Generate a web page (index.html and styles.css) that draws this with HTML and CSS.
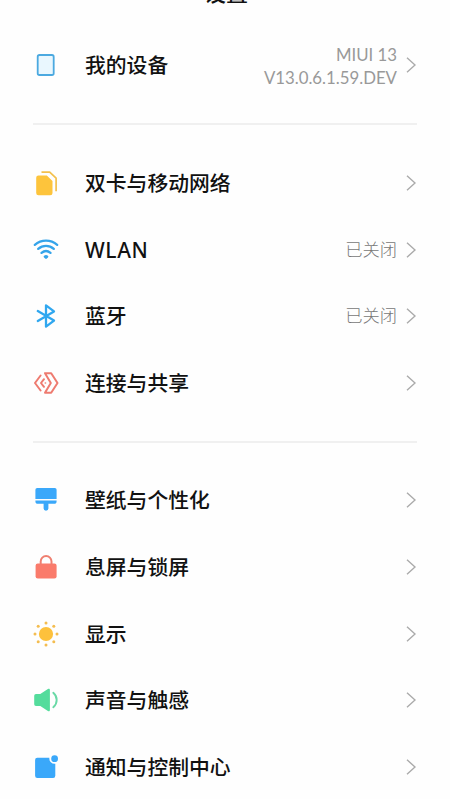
FILE: index.html
```html
<!DOCTYPE html>
<html lang="zh-CN">
<head>
<meta charset="utf-8">
<title>设置</title>
<link rel="stylesheet" href="styles.css">
</head>
<body>
<main class="screen">
  <header class="header"><h1 class="title">设置</h1></header>

  <section class="group">
    <div class="row">
      <svg class="icon" viewBox="0 0 28 28"><rect x="5.700" y="4" width="16" height="20" rx="1.8" fill="#e9f7fe" stroke="#4ba9e0" stroke-width="1.8"/></svg>
      <span class="label">我的设备</span>
      <span class="value version"><span>MIUI 13</span><span>V13.0.6.1.59.DEV</span></span>
      <svg class="chevron" viewBox="0 0 10 16"><path d="M1 .8 9 8 1 15.2"/></svg>
    </div>
  </section>

  <section class="group">
    <div class="row">
      <svg class="icon" viewBox="0 0 28 28"><path d="M6.500 6.400h8.300l5.700 5.600v12a2.300 2.300 0 0 1-2.300 2.300H6.500A2.300 2.300 0 0 1 4.200 24V8.700a2.300 2.300 0 0 1 2.300-2.300z" fill="#fdc43c"/><path d="M9.500 3.200h8.200l6.400 6v13" fill="none" stroke="#f3c04d" stroke-width="1.700" stroke-linejoin="round"/></svg>
      <span class="label">双卡与移动网络</span>
      <svg class="chevron" viewBox="0 0 10 16"><path d="M1 .8 9 8 1 15.2"/></svg>
    </div>
    <div class="row">
      <svg class="icon" viewBox="0 0 28 28" fill="none" stroke="#35a4ea" stroke-width="2.300" stroke-linecap="round"><path d="M2.800 8.900c6.500-5.600 15.900-5.600 22.400 0M6.200 12.900c4.600-4 11-4 15.600 0M9.500 16.900c2.700-2.300 6.300-2.300 9 0"/><path d="M12.800 20.600q1.200-1 2.400 0L14 21.800z" stroke-linejoin="round"/></svg>
      <span class="label latin">WLAN</span>
      <span class="value">已关闭</span>
      <svg class="chevron" viewBox="0 0 10 16"><path d="M1 .8 9 8 1 15.2"/></svg>
    </div>
    <div class="row">
      <svg class="icon" viewBox="0 0 28 28"><path d="M5.800 9 22 18.600 14 24.600V3.400L22 9.400 5.800 19" fill="none" stroke="#30a7ef" stroke-width="2.300" stroke-linejoin="round" stroke-linecap="round"/></svg>
      <span class="label">蓝牙</span>
      <span class="value">已关闭</span>
      <svg class="chevron" viewBox="0 0 10 16"><path d="M1 .8 9 8 1 15.2"/></svg>
    </div>
    <div class="row">
      <svg class="icon" viewBox="0 0 28 28" fill="none" stroke="#ee7b70" stroke-width="2" stroke-linejoin="round" stroke-linecap="round"><path d="M13 4.200h6.200l6.300 9.800-6.300 9.800H13l5.800-9.800z"/><path d="M8.600 6.500 3 14l5.600 7.500M12 10.200 9 14l3 3.800"/><path d="M13.300 14h.2" stroke-width="1.600"/></svg>
      <span class="label">连接与共享</span>
      <svg class="chevron" viewBox="0 0 10 16"><path d="M1 .8 9 8 1 15.2"/></svg>
    </div>
  </section>

  <section class="group">
    <div class="row">
      <svg class="icon" viewBox="0 0 28 28" fill="#3aa8fa"><path d="M5.200 2h17.600a1.800 1.800 0 0 1 1.800 1.800V13H3.400V3.800A1.800 1.800 0 0 1 5.200 2z"/><path d="M3.400 14.600h21.200v.6a2.600 2.600 0 0 1-2.600 2.600h-5.600v4.500a2.400 2.400 0 0 1-4.800 0v-4.500H6a2.600 2.600 0 0 1-2.600-2.600z"/></svg>
      <span class="label">壁纸与个性化</span>
      <svg class="chevron" viewBox="0 0 10 16"><path d="M1 .8 9 8 1 15.2"/></svg>
    </div>
    <div class="row">
      <svg class="icon" viewBox="0 0 28 28"><rect x="3.600" y="10.500" width="21" height="15" rx="2.200" fill="#fa7b6b"/><path d="M8.700 11.500V8.400a5.400 5.400 0 0 1 10.800 0v3.100" fill="none" stroke="#ef7f70" stroke-width="2"/></svg>
      <span class="label">息屏与锁屏</span>
      <svg class="chevron" viewBox="0 0 10 16"><path d="M1 .8 9 8 1 15.2"/></svg>
    </div>
    <div class="row">
      <svg class="icon" viewBox="0 0 28 28" fill="#fdc13c"><circle cx="14" cy="14" r="7.100"/><g fill="#f4bd50"><circle cx="14" cy="3" r="1.500"/><circle cx="14" cy="25" r="1.500"/><circle cx="3" cy="14" r="1.500"/><circle cx="25" cy="14" r="1.500"/><circle cx="6.200" cy="6.200" r="1.500"/><circle cx="21.800" cy="6.200" r="1.500"/><circle cx="6.200" cy="21.800" r="1.500"/><circle cx="21.800" cy="21.800" r="1.500"/></g></svg>
      <span class="label">显示</span>
      <svg class="chevron" viewBox="0 0 10 16"><path d="M1 .8 9 8 1 15.2"/></svg>
    </div>
    <div class="row">
      <svg class="icon" viewBox="0 0 28 28"><path d="M4 8h4.300l7.600-5c1-.7 2-.3 2 .9v20.200c0 1.200-1 1.600-2 .9L8.300 20H4a1.800 1.800 0 0 1-1.800-1.800V9.800A1.800 1.800 0 0 1 4 8z" fill="#54dc9c"/><path d="M21.300 6.800c4.500 3.800 4.500 10.600 0 14.400" fill="none" stroke="#69d9a6" stroke-width="1.900" stroke-linecap="round"/></svg>
      <span class="label">声音与触感</span>
      <svg class="chevron" viewBox="0 0 10 16"><path d="M1 .8 9 8 1 15.2"/></svg>
    </div>
    <div class="row">
      <svg class="icon" viewBox="0 0 28 28" fill="#3aa8fa"><path d="M5.300 4.800H17.400a5.300 5.300 0 0 0 5.900 6V22.700a2.200 2.200 0 0 1-2.200 2.200H5.300a2.200 2.200 0 0 1-2.200-2.200V7a2.200 2.200 0 0 1 2.200-2.200z"/><circle cx="22.600" cy="5.700" r="3.400"/></svg>
      <span class="label">通知与控制中心</span>
      <svg class="chevron" viewBox="0 0 10 16"><path d="M1 .8 9 8 1 15.2"/></svg>
    </div>
  </section>
</main>
</body>
</html>
```
FILE: styles.css
```css
* {
  box-sizing: border-box;
}

body {
  margin: 0;
  background: #fefefe;
  color: #111;
  font-family: "Noto Sans CJK SC", sans-serif;
}

.screen {
  height: 799px;
  padding: 0 33px;
  overflow: hidden;
}

.header {
  height: 32.200px;
  overflow: hidden;
}

.title {
  margin: -20px 0 0 2px;
  font-size: 22px;
  line-height: 22px;
  font-weight: 500;
  text-align: center;
}

.group + .group {
  margin-top: 24.500px;
  padding-top: 24.500px;
  border-top: 2px solid #f0f0f0;
}

.row {
  display: flex;
  align-items: center;
  height: 66.600px;
}

.icon {
  flex: none;
  width: 28px;
  height: 28px;
  margin: 0 25px 0 -1px;
}

.label {
  flex: 1;
  padding-bottom: 2px;
  font-size: 20.800px;
  line-height: 30px;
  font-weight: 500;
  white-space: nowrap;
}

.latin {
  padding-bottom: 0;
  font-family: "Noto Sans", sans-serif;
  font-size: 21px;
  letter-spacing: .6px;
}

.value {
  padding-bottom: 2px;
  font-size: 17.300px;
  line-height: 24px;
  font-weight: 300;
  color: #777;
}

.version {
  display: flex;
  flex-direction: column;
  align-items: flex-end;
  padding: 1px 0 0;
  font-family: Lato, sans-serif;
  font-size: 16.800px;
  line-height: 23px;
  font-weight: 400;
  color: #999;
}

.chevron {
  flex: none;
  width: 10px;
  height: 16px;
  margin: 0 1px 0 9px;
  fill: none;
  stroke: #aaa;
  stroke-width: 1.400px;
}
```
